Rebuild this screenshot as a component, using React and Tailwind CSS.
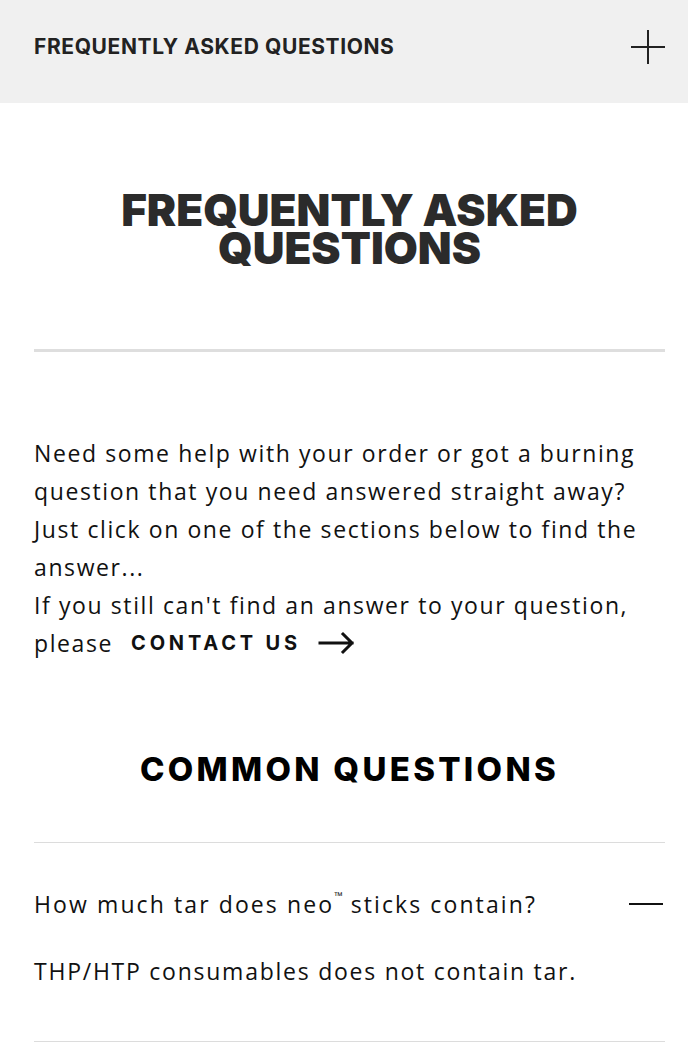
import React, { useState } from 'react';

const faqs = [
  {
    q: <>How much tar does neo<sup className="text-[11px] align-[8px] tracking-normal">™</sup> sticks contain?</>,
    a: 'THP/HTP consumables does not contain tar.',
  },
];

function PlusIcon() {
  return (
    <svg width="36" height="36" viewBox="0 0 36 36" fill="none" stroke="#222" strokeWidth="2">
      <path d="M18 1v34M1 18h34" />
    </svg>
  );
}

function MinusIcon() {
  return (
    <svg width="34" height="4" viewBox="0 0 34 4" fill="none" stroke="#111" strokeWidth="2">
      <path d="M0 2h34" />
    </svg>
  );
}

function ArrowIcon() {
  return (
    <svg width="38" height="24" viewBox="0 0 38 24" fill="none" stroke="#111" strokeWidth="3" strokeLinecap="square">
      <path d="M2 12h32M25 3l9 9-9 9" />
    </svg>
  );
}

export default function App() {
  const [open, setOpen] = useState(0);

  return (
    <div className="min-h-screen bg-white text-[#111] font-['Open_Sans',sans-serif]">
      {/* Top bar */}
      <header className="bg-[#f0f0f0] h-[103px] pl-[34px] pr-[22px] flex items-center justify-between">
        <span className="-mt-[10px] text-[21px] font-bold tracking-[0.6px] text-[#222] font-['Inter',sans-serif]">
          FREQUENTLY ASKED QUESTIONS
        </span>
        <button className="-mt-[10px]">
          <PlusIcon />
        </button>
      </header>

      <main className="pl-[34px] pr-[23px]">
        <h1 className="pt-[88px] text-center text-[44px] leading-[38px] font-black text-[#2b2b2b] font-['Inter',sans-serif]">
          FREQUENTLY ASKED
          <br />
          QUESTIONS
        </h1>

        <hr className="mt-[82px] border-0 h-[3px] bg-[#dedede]" />

        <div className="mt-[82px] text-[23px] leading-[38px] tracking-[1.6px] text-[#111] whitespace-nowrap">
          <p>
            Need some help with your order or got a burning
            <br />
            question that you need answered straight away?
            <br />
            Just click on one of the sections below to find the
            <br />
            answer...
          </p>
          <p>If you still can't find an answer to your question,</p>
          <p className="flex items-center">
            please
            <a href="#" className="ml-[18px] font-bold text-[20px] tracking-[3.8px] font-['Inter',sans-serif]">CONTACT US</a>
            <span className="ml-[17px] flex">
              <ArrowIcon />
            </span>
          </p>
        </div>

        <h2 className="mt-[85px] text-center text-[33px] font-extrabold text-black font-['Inter',sans-serif] tracking-[3.3px] leading-[44px]">
          COMMON QUESTIONS
        </h2>

        <div className="mt-[51px] border-t border-[#dcdcdc]">
          {faqs.map((f, i) => (
            <div key={i} className="border-b border-[#dcdcdc]">
              <button
                onClick={() => setOpen(open === i ? -1 : i)}
                className="w-full flex items-center justify-between pt-[44px] text-left"
              >
                <span className="text-[23px] leading-[34px] tracking-[2.1px]">{f.q}</span>
                <span className="mr-[2px]">
                  <MinusIcon />
                </span>
              </button>
              {open === i && (
                <p className="pt-[33px] pb-[53px] text-[23px] leading-[34px] tracking-[1.75px]">{f.a}</p>
              )}
            </div>
          ))}
        </div>
      </main>
    </div>
  );
}
